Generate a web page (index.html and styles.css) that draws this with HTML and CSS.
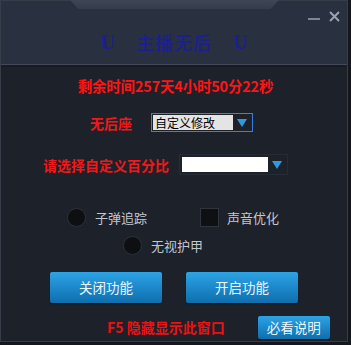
FILE: index.html
```html
<!DOCTYPE html>
<html lang="zh-CN">
<head>
<meta charset="utf-8">
<title>主播无后</title>
<link rel="stylesheet" href="styles.css">
</head>
<body>
<div class="window">
  <div class="header">
    <div class="tab"></div>
    <div class="title">
      <span class="title-u">U</span>
      <span class="title-text">主播无后</span>
      <span class="title-u">U</span>
    </div>
    <div class="controls">
      <svg class="ctl-min" width="12" height="4" viewBox="0 0 12 4"><rect x="0" y="1" width="12" height="2" fill="#7d8594"/></svg>
      <svg class="ctl-close" width="11" height="11" viewBox="0 0 11 11"><path d="M1 1 L10 10 M10 1 L1 10" stroke="#9aa2b0" stroke-width="2"/></svg>
    </div>
  </div>
  <div class="body">
    <div class="timer">剩余时间257天4小时50分22秒</div>

    <div class="row row-recoil">
      <span class="red-label">无后座</span>
      <div class="select">
        <div class="select-value">自定义修改</div>
        <div class="select-arrow"><span class="tri"></span></div>
      </div>
    </div>

    <div class="row row-percent">
      <span class="red-label">请选择自定义百分比</span>
      <div class="combo">
        <div class="combo-value"></div>
        <div class="combo-arrow"><span class="tri"></span></div>
      </div>
    </div>

    <div class="opts opts-1">
      <span class="radio"></span>
      <span class="opt-label">子弹追踪</span>
      <span class="check"></span>
      <span class="opt-label">声音优化</span>
    </div>
    <div class="opts opts-2">
      <span class="radio"></span>
      <span class="opt-label">无视护甲</span>
    </div>

    <div class="buttons">
      <div class="btn btn-big">关闭功能</div>
      <div class="btn btn-big">开启功能</div>
    </div>

    <div class="footer">
      <span class="hotkey">F5 隐藏显示此窗口</span>
      <div class="btn btn-small">必看说明</div>
    </div>
  </div>
</div>
</body>
</html>
```

FILE: styles.css
```css
html, body {
  margin: 0;
  padding: 0;
  background: #14171d;
}
body {
  width: 351px;
  height: 345px;
  overflow: hidden;
  font-family: "Noto Sans CJK SC", "Liberation Sans", sans-serif;
}
.window {
  box-sizing: border-box;
  width: 348px;
  height: 342px;
  border: 1px solid #363c48;
  background: #1d212a;
  display: flex;
  flex-direction: column;
}
.header {
  position: relative;
  height: 63px;
  background: #293040;
  border-bottom: 1px solid #434b5a;
  display: flex;
  flex-direction: column;
  align-items: center;
}
.tab {
  width: 209px;
  height: 9px;
  margin-top: -1px;
  margin-left: 1px;
  background: linear-gradient(#3e4655, #353d4c);
  clip-path: polygon(0 0, 100% 0, 96% 100%, 4% 100%);
}
.title {
  display: flex;
  align-items: center;
  gap: 21px;
  margin-top: 21px;
  height: 24px;
  color: #1c1f92;
}
.title-u {
  font-family: "Liberation Serif", serif;
  font-size: 20px;
  line-height: 24px;
  font-weight: 700;
}
.title-text {
  font-family: "Noto Sans CJK SC", sans-serif;
  font-size: 18px;
  line-height: 24px;
  letter-spacing: 1px;
  font-weight: 500;
}
.controls {
  position: absolute;
  top: 10px;
  right: 7px;
  display: flex;
  align-items: center;
  gap: 9px;
}
.ctl-min { display: block; margin-top: 4px; }
.ctl-close { display: block; }
.body {
  flex: 1;
  display: flex;
  flex-direction: column;
  border-top: 2px solid #181b22;
}
.timer {
  margin-top: 9px;
  height: 20px;
  line-height: 20px;
  text-align: center;
  margin-left: 3px;
  color: #ff1414;
  font-weight: 700;
  font-size: 14.5px;
  letter-spacing: -0.2px;
}
.row {
  display: flex;
  align-items: center;
}
.red-label {
  color: #f01818;
  font-weight: 700;
  font-size: 14px;
  line-height: 18px;
}
.row-recoil {
  margin-top: 17px;
  padding-left: 89px;
  gap: 19px;
}
.select {
  box-sizing: border-box;
  width: 102px;
  height: 19px;
  border: 1px solid #3b7fd8;
  display: flex;
  align-items: stretch;
  padding: 1px;
}
.select-value {
  width: 80px;
  background: #e4e4e4;
  color: #000;
  font-size: 12px;
  line-height: 15px;
  padding-left: 2px;
  box-sizing: border-box;
  white-space: nowrap;
}
.select-arrow, .combo-arrow {
  flex: 1;
  display: flex;
  align-items: center;
  justify-content: center;
}
.tri {
  width: 0;
  height: 0;
  border-left: 5px solid transparent;
  border-right: 5px solid transparent;
  border-top: 8px solid #2e9be0;
}
.row-percent {
  margin-top: 22px;
  padding-left: 42px;
  gap: 10px;
}
.combo {
  box-sizing: border-box;
  width: 109px;
  height: 21px;
  border: 1px solid #262b35;
  display: flex;
  padding: 2px;
}
.combo-value {
  width: 86px;
  background: #ffffff;
}
.opts {
  display: flex;
  align-items: center;
}
.opts-1 {
  margin-top: 33px;
  padding-left: 66px;
}
.opts-2 {
  margin-top: 9px;
  padding-left: 122px;
}
.radio {
  box-sizing: border-box;
  width: 19px;
  height: 19px;
  border-radius: 50%;
  background: #0d0f13;
  border: 1px solid #2b303a;
  margin-right: 9px;
}
.check {
  box-sizing: border-box;
  width: 19px;
  height: 19px;
  background: #0e1014;
  border: 1px solid #30343c;
  margin-left: 53px;
  margin-right: 8px;
}
.opt-label {
  color: #c3c7ce;
  font-size: 13px;
  line-height: 19px;
}
.buttons {
  display: flex;
  gap: 24px;
  margin-top: 17px;
  padding-left: 49px;
}
.btn {
  box-sizing: border-box;
  background: linear-gradient(#2ea3e4, #1a86c8 55%, #0f6eac);
  color: #eef6fc;
  font-size: 13.5px;
  text-align: center;
  border-radius: 2px;
  box-shadow: 0 1px 1px rgba(0,0,0,0.5);
}
.btn-big {
  width: 112px;
  height: 31px;
  line-height: 31px;
}
.footer {
  display: flex;
  align-items: center;
  margin-top: 12px;
  padding-left: 106px;
}
.hotkey {
  color: #f01010;
  font-weight: 700;
  font-size: 14px;
  line-height: 23px;
  margin-top: 1px;
}
.btn-small {
  width: 72px;
  height: 23px;
  line-height: 23px;
  margin-left: 33px;
}
```
